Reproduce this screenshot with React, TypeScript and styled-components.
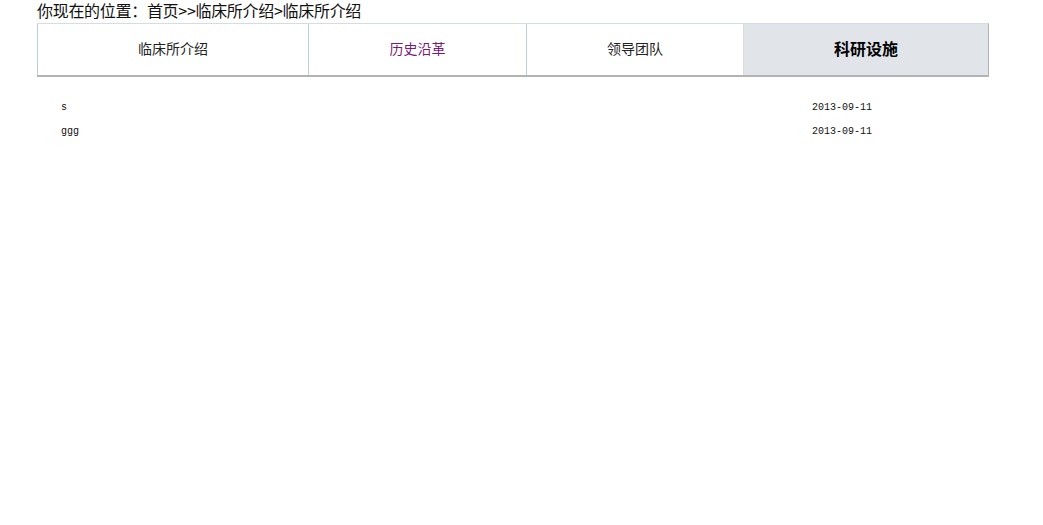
import React from 'react';
import styled, { createGlobalStyle } from 'styled-components';

const GlobalStyle = createGlobalStyle`
    body {
        margin: 0;
        background: #ffffff;
        font-family: "Liberation Sans", "Noto Sans CJK SC", sans-serif;
    }
`;

const Page = styled.div`
    width: 952px;
    margin-left: 37px;
`;

const Breadcrumb = styled.div`
    font-size: 16px;
    line-height: 20px;
    height: 23px;
    margin-top: -2px;
    padding-top: 2px;
    box-sizing: border-box;
    color: #111;
    font-family: "Noto Sans CJK SC", sans-serif;
    letter-spacing: -0.3px;
    white-space: nowrap;
`;

const TabBar = styled.div`
    display: grid;
    grid-template-columns: 271px 218px 217px 1fr;
    height: 51px;
    margin-top: 2px;
    border-top: 1px solid #d6dde0;
    border-bottom: 2px solid #b3b3b3;
    border-right: 1px solid #b3b3b3;
`;

const Tab = styled.div<{ $active?: boolean; $visited?: boolean }>`
    display: flex;
    align-items: center;
    justify-content: center;
    border-left: 1px solid ${p => (p.$active ? '#d6dde0' : '#b9d0d8')};
    background: ${p => (p.$active ? '#e1e5ea' : '#ffffff')};
    color: ${p => (p.$visited ? '#7a1a7a' : p.$active ? '#000' : '#222')};
    font-family: "Noto Sans CJK SC", sans-serif;
    font-size: ${p => (p.$active ? '16px' : '14px')};
    font-weight: ${p => (p.$active ? 700 : 400)};
    padding-bottom: 3px;
    cursor: pointer;
`;

const List = styled.div`
    padding: 18px 24px 0 24px;
`;

const Row = styled.div`
    display: grid;
    grid-template-columns: 1fr 153px;
    height: 24px;
    align-items: center;
    font-family: "Liberation Mono", monospace;
    font-size: 10px;
    color: #111;
`;

const tabs = [
    { label: '临床所介绍' },
    { label: '历史沿革', visited: true },
    { label: '领导团队' },
    { label: '科研设施', active: true },
];

const items = [
    { title: 's', date: '2013-09-11' },
    { title: 'ggg', date: '2013-09-11' },
];

export default function App() {
    return (
        <>
            <GlobalStyle />
            <Page>
                <Breadcrumb>你现在的位置：首页&gt;&gt;临床所介绍&gt;临床所介绍</Breadcrumb>
                <TabBar>
                    {tabs.map(t => (
                        <Tab key={t.label} $active={t.active} $visited={t.visited}>{t.label}</Tab>
                    ))}
                </TabBar>
                <List>
                    {items.map(i => (
                        <Row key={i.title}>
                            <span>{i.title}</span>
                            <span>{i.date}</span>
                        </Row>
                    ))}
                </List>
            </Page>
        </>
    );
}
